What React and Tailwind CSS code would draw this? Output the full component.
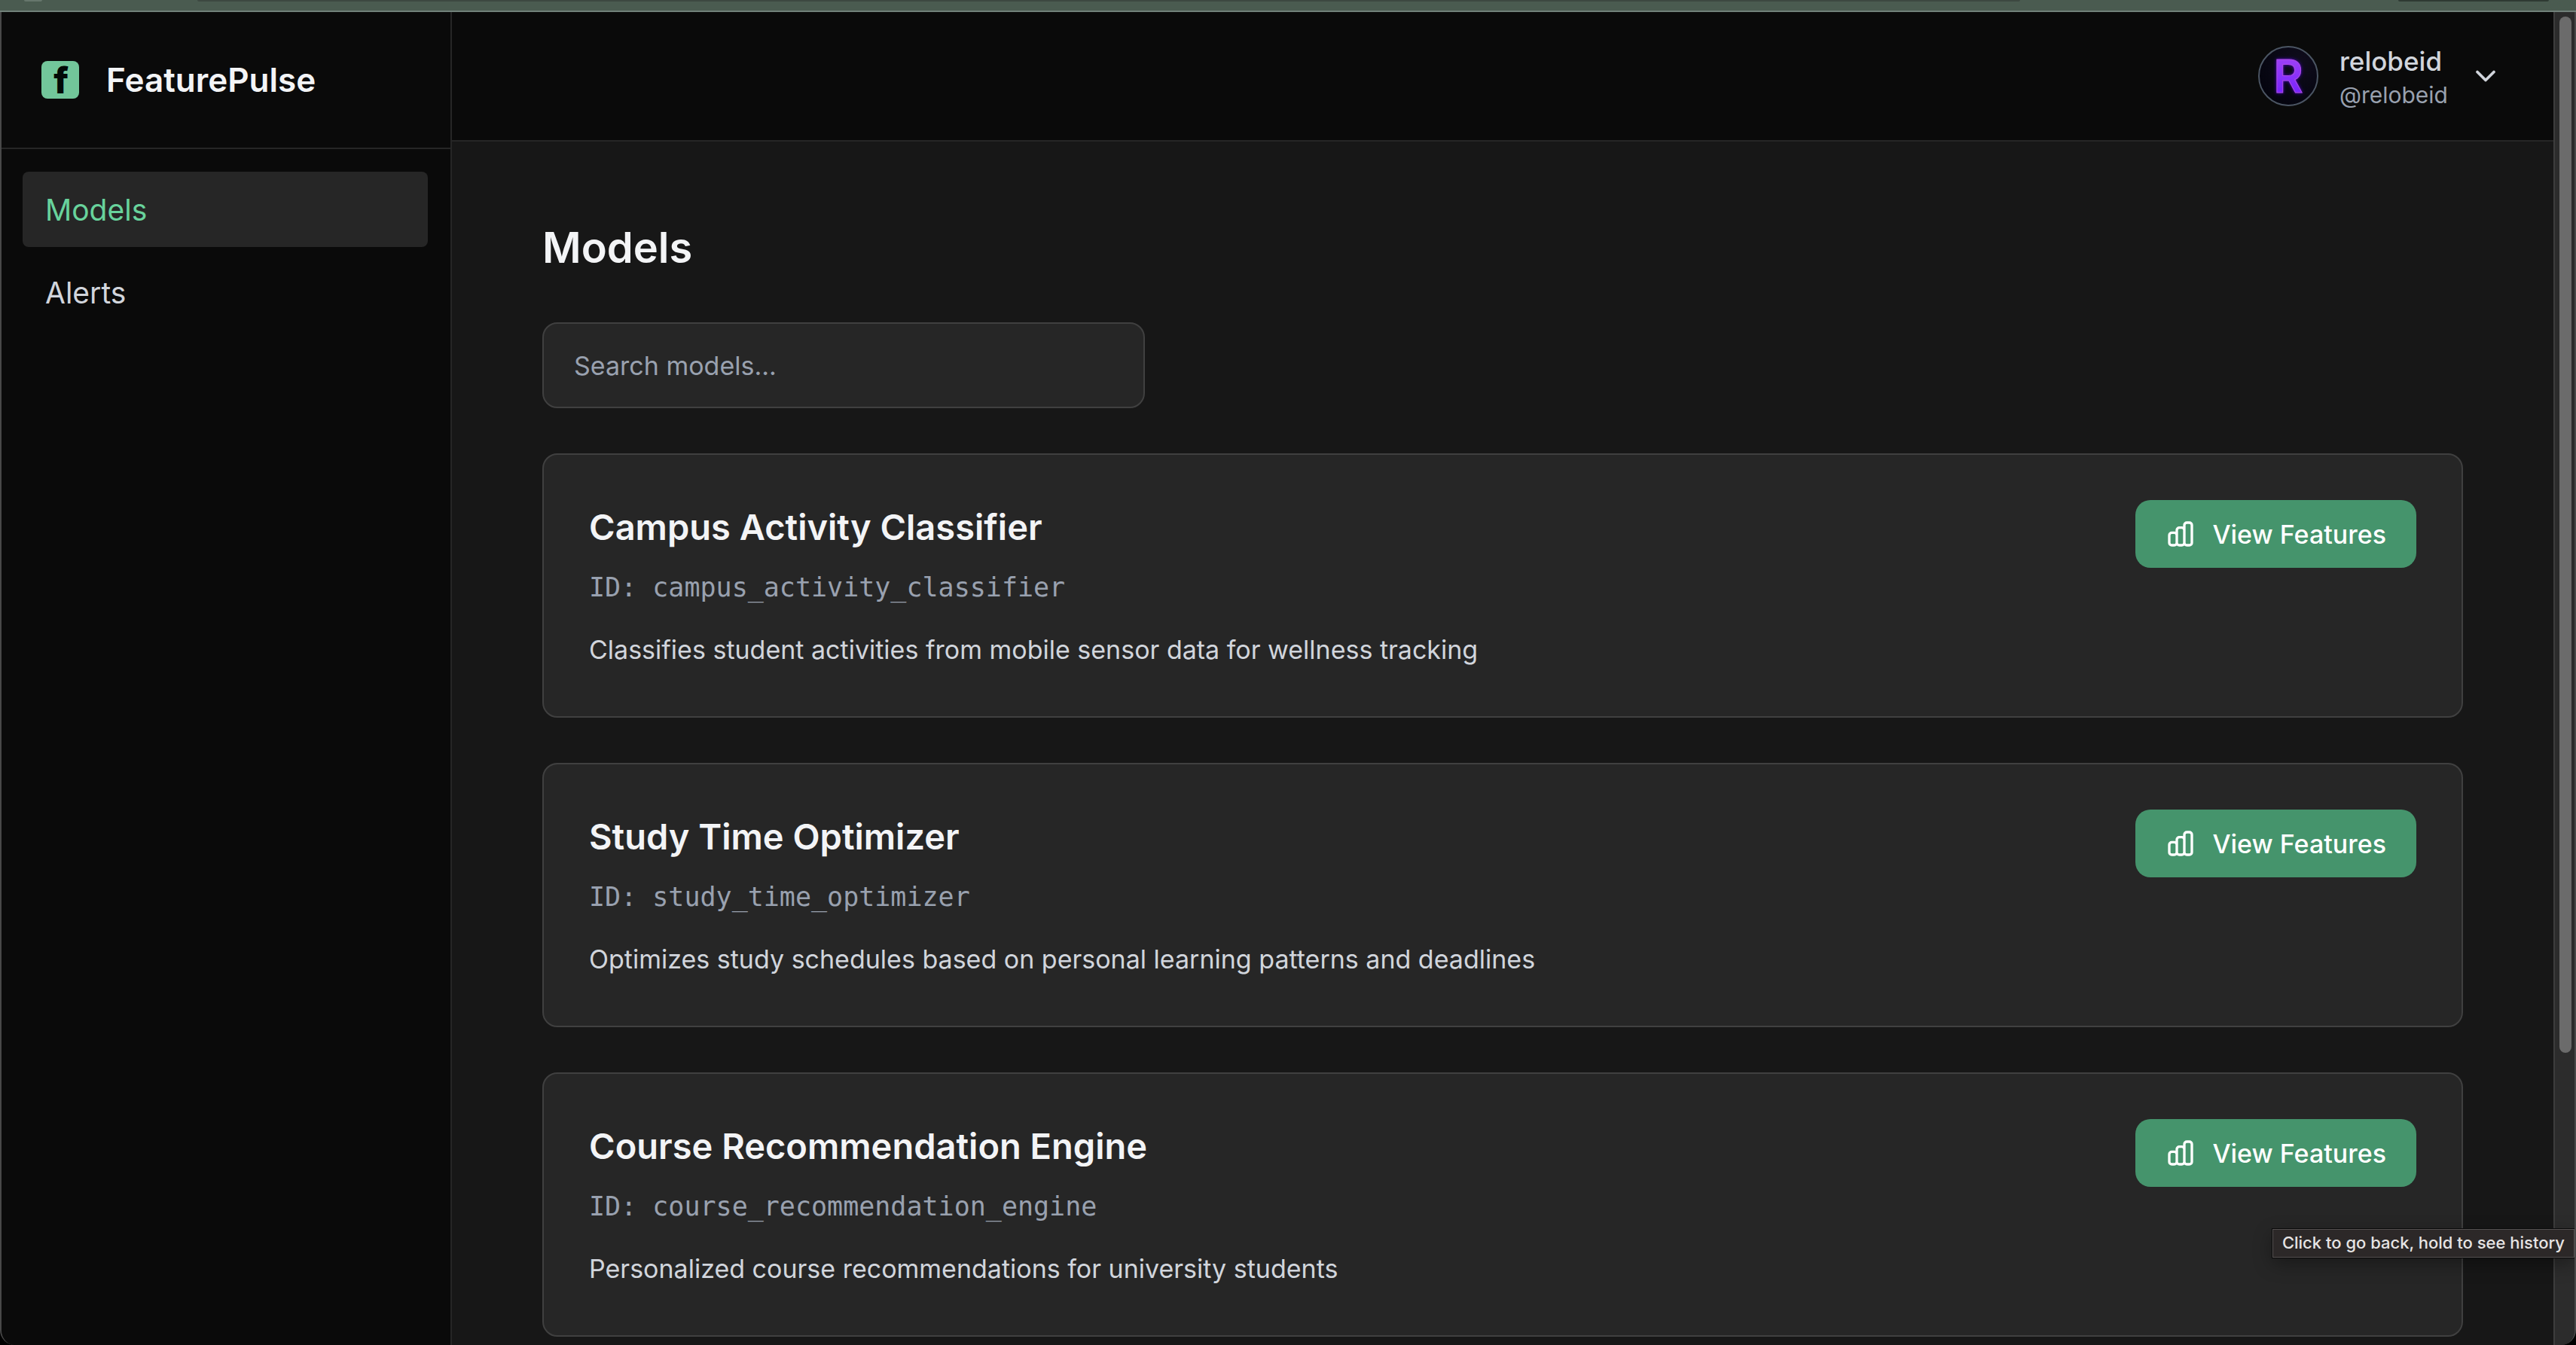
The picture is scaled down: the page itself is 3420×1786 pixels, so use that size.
import React from 'react';
import { ChevronDown } from 'lucide-react';

const NAV = [
  { label: 'Models', active: true },
  { label: 'Alerts', active: false },
];

const MODELS = [
  {
    name: 'Campus Activity Classifier',
    id: 'campus_activity_classifier',
    description: 'Classifies student activities from mobile sensor data for wellness tracking',
  },
  {
    name: 'Study Time Optimizer',
    id: 'study_time_optimizer',
    description: 'Optimizes study schedules based on personal learning patterns and deadlines',
  },
  {
    name: 'Course Recommendation Engine',
    id: 'course_recommendation_engine',
    description: 'Personalized course recommendations for university students',
  },
];

function ChartBarIcon() {
  return (
    <svg className="size-10 shrink-0" viewBox="0 0 24 24" fill="none" stroke="currentColor" strokeWidth="2" strokeLinecap="round" strokeLinejoin="round" aria-hidden="true">
      <path d="M9 19v-6a2 2 0 00-2-2H5a2 2 0 00-2 2v6a2 2 0 002 2h2a2 2 0 002-2zm0 0V9a2 2 0 012-2h2a2 2 0 012 2v10m-6 0a2 2 0 002 2h2a2 2 0 002-2m0 0V5a2 2 0 012-2h2a2 2 0 012 2v14a2 2 0 01-2 2h-2a2 2 0 01-2-2z" />
    </svg>
  );
}

function Logo() {
  return (
    <svg className="size-[50px] shrink-0 overflow-visible" viewBox="0 0 50 50" aria-hidden="true">
      <rect width="50" height="50" rx="8" fill="#72c69a" />
      <text x="26" y="43" textAnchor="middle" fontFamily="Inter, sans-serif" fontWeight="800" fontSize="48" fill="#020a06">
        f
      </text>
    </svg>
  );
}

function Avatar() {
  return (
    <svg className="size-20 shrink-0" viewBox="0 0 80 80" aria-hidden="true">
      <defs>
        <linearGradient id="avatar-letter" x1="0" y1="0" x2="0" y2="1">
          <stop offset="0" stopColor="#a848f5" />
          <stop offset="1" stopColor="#6c1cff" />
        </linearGradient>
        <radialGradient id="avatar-bg" cx="0.7" cy="0.25" r="0.8">
          <stop offset="0" stopColor="#0f0c1c" />
          <stop offset="1" stopColor="#04040e" />
        </radialGradient>
        <filter id="avatar-glow" x="-0.3" y="-0.3" width="1.6" height="1.6">
          <feDropShadow dx="0" dy="0" stdDeviation="2" floodColor="#5a10ff" floodOpacity="0.8" />
        </filter>
      </defs>
      <circle cx="40" cy="40" r="39" fill="url(#avatar-bg)" stroke="#4b5563" strokeWidth="2" />
      <text x="40" y="62" textAnchor="middle" fontFamily="Inter, sans-serif" fontWeight="600" fontSize="60" fill="url(#avatar-letter)" stroke="#b04be6" strokeWidth="1" filter="url(#avatar-glow)">
        R
      </text>
    </svg>
  );
}

function BrowserEdge() {
  return (
    <div className="flex h-4 shrink-0 items-start border-b-2 border-[#71817a] bg-[#4a5b50] pr-9 pl-8">
      <div className="h-0.5 w-6 rounded-b-full bg-[#66766c]" />
      <div className="ml-[206px] h-0.5 flex-1 rounded-b-full bg-[#3d4841]" />
      <div className="ml-[502px] h-0.5 w-[200px] rounded-b-full bg-[#2f3a33]" />
    </div>
  );
}

function Sidebar() {
  return (
    <aside className="flex w-[598px] shrink-0 flex-col border-r-2 border-[#262626] bg-[#0a0a0a]">
      <div className="flex h-[182px] items-center gap-9 border-b-2 border-[#262626] pl-[53px]">
        <Logo />
        <span className="text-[44px] leading-[60px] font-semibold text-gray-100">FeaturePulse</span>
      </div>
      <nav className="flex flex-col gap-2.5 py-[30px] pr-[30px] pl-7">
        {NAV.map((item) => (
          <a
            key={item.label}
            href="#"
            className={
              item.active
                ? 'flex h-[100px] items-center rounded-lg bg-[#262626] px-[30px] pt-0.5 text-[39px] text-[#68d39c]'
                : 'flex h-[100px] items-center rounded-lg px-[30px] pt-0.5 text-[39px] text-gray-300'
            }
          >
            {item.label}
          </a>
        ))}
      </nav>
    </aside>
  );
}

function Header() {
  return (
    <header className="flex h-[172px] shrink-0 items-center justify-end border-b-2 border-[#262626] bg-[#0a0a0a] pr-[68px]">
      <button type="button" className="flex items-center gap-7 text-left text-gray-300">
        <Avatar />
        <span className="flex flex-col">
          <span className="text-[35px] leading-[50px] font-medium">relobeid</span>
          <span className="text-[30px] leading-10 text-gray-400">@relobeid</span>
        </span>
        <ChevronDown className="size-11" strokeWidth={2} aria-hidden="true" />
      </button>
    </header>
  );
}

function ModelCard({ model }) {
  return (
    <article className="flex items-start justify-between rounded-[20px] border-2 border-[#404040] bg-[#262626] p-[60px]">
      <div>
        <h2 className="text-[47px] leading-[72px] font-semibold text-gray-100">{model.name}</h2>
        <p className="mt-[18px] font-['DejaVu_Sans_Mono',monospace] text-[35px] leading-[52px] text-gray-400">ID: {model.id}</p>
        <p className="mt-7 text-[34px] leading-[57px] text-gray-300">{model.description}</p>
      </div>
      <button type="button" className="flex h-[90px] shrink-0 items-center gap-[22px] rounded-[20px] bg-[#45946c] px-10 text-[34px] font-medium text-white">
        <ChartBarIcon />
        View Features
      </button>
    </article>
  );
}

function Scrollbar() {
  return (
    <div className="w-7 shrink-0 border-l-2 border-[#3d3d3d] bg-[#2c2c2c] pt-1.5 pr-1 pl-1.5">
      <div className="h-[78%] rounded-full bg-[#6b6b6b]" />
    </div>
  );
}

export default function App() {
  return (
    <div className="flex h-screen flex-col overflow-hidden bg-black font-['Inter',sans-serif]">
      <BrowserEdge />
      <div className="relative flex min-h-0 flex-1 overflow-hidden rounded-b-[20px] border-x-2 border-[#484848] bg-[#171717]">
        <Sidebar />
        <div className="flex min-w-0 flex-1 flex-col">
          <Header />
          <main className="min-h-0 flex-1 overflow-hidden px-[120px] pt-[100px]">
            <h1 className="mb-[58px] text-[56px] leading-[82px] font-semibold text-gray-100">Models</h1>
            <input
              type="text"
              aria-label="Search models"
              placeholder="Search models..."
              className="mb-[60px] block h-[114px] w-[800px] rounded-[20px] border-2 border-[#404040] bg-[#262626] px-10 text-[34px] text-gray-100 placeholder:text-gray-400"
            />
            <div className="flex flex-col gap-[60px]">
              {MODELS.map((model) => (
                <ModelCard key={model.id} model={model} />
              ))}
            </div>
          </main>
        </div>
        <Scrollbar />
        <div role="tooltip" className="absolute right-0 bottom-[116px] flex h-[38px] items-center border border-[#545050] bg-[#2c2828] px-3 pb-0.5 text-[22px] font-medium whitespace-nowrap text-[#e6e4e4] shadow-[0_0_0_1px_#0a0a0a,0_8px_24px_rgba(0,0,0,0.35)]">
          Click to go back, hold to see history
        </div>
      </div>
    </div>
  );
}
